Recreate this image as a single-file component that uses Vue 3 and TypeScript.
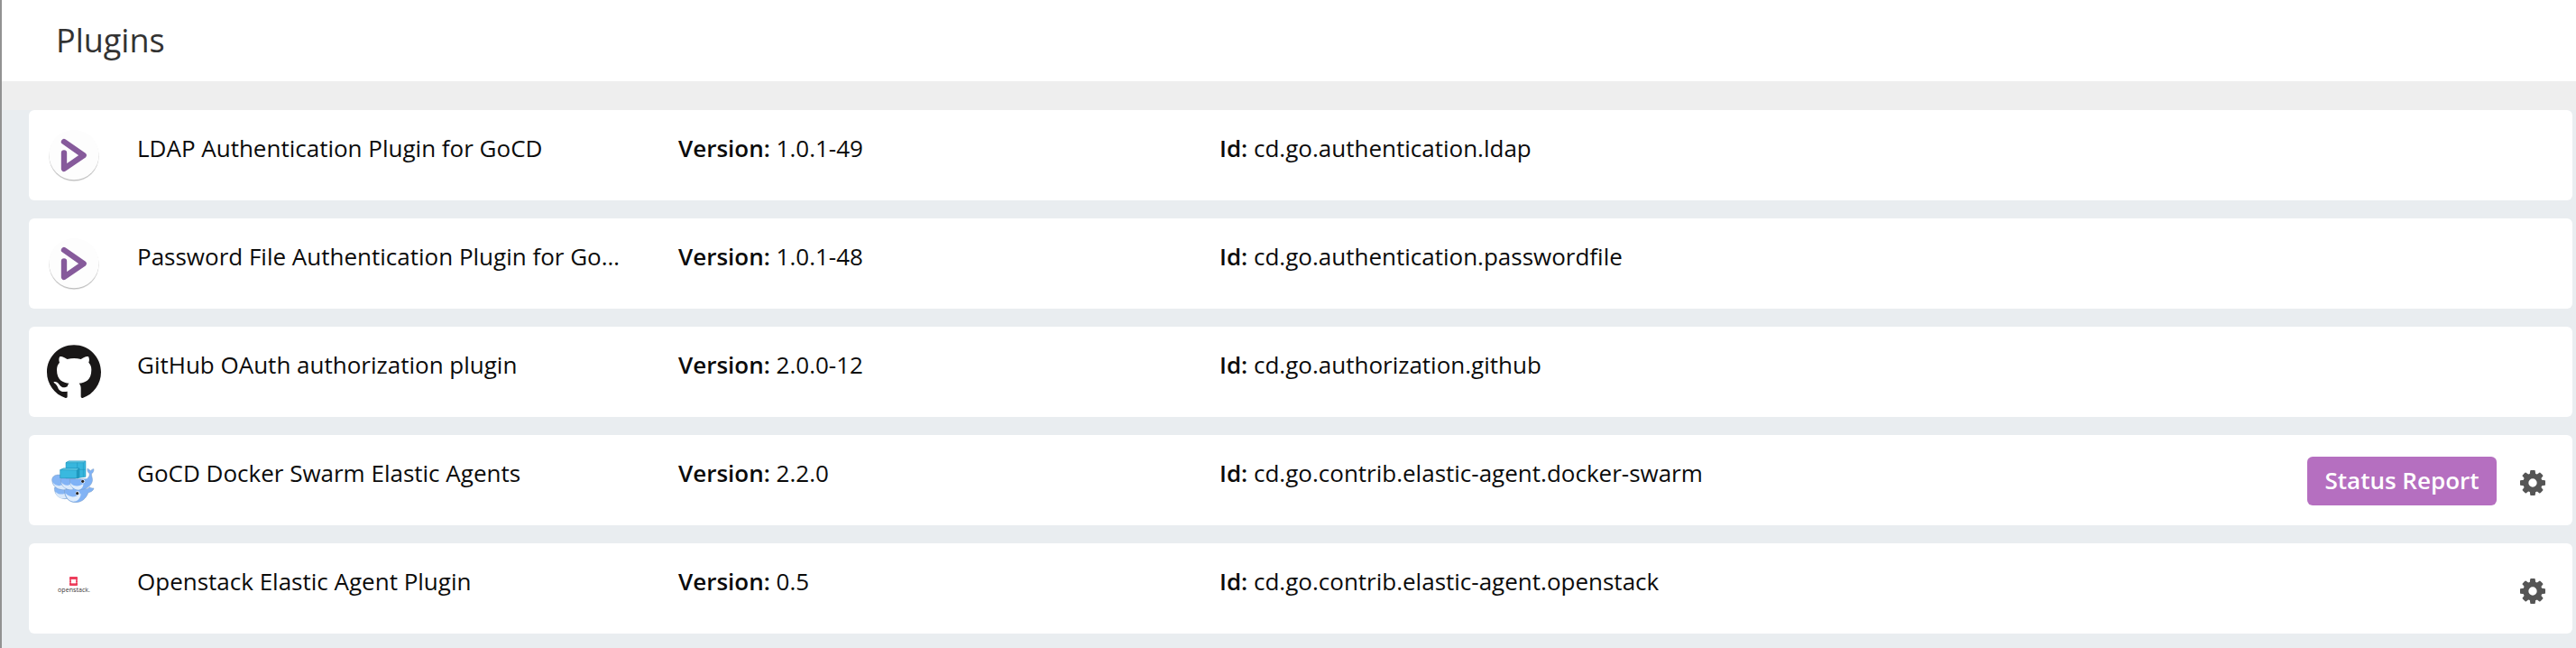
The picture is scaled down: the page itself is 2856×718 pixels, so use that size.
<script setup lang="ts">
type Icon = 'gocd' | 'github' | 'docker' | 'openstack'

interface Plugin {
  name: string
  version: string
  id: string
  icon: Icon
  statusReport?: boolean
  settings?: boolean
}

const plugins: Plugin[] = [
  { name: 'LDAP Authentication Plugin for GoCD', version: '1.0.1-49', id: 'cd.go.authentication.ldap', icon: 'gocd' },
  { name: 'Password File Authentication Plugin for Go…', version: '1.0.1-48', id: 'cd.go.authentication.passwordfile', icon: 'gocd' },
  { name: 'GitHub OAuth authorization plugin', version: '2.0.0-12', id: 'cd.go.authorization.github', icon: 'github' },
  { name: 'GoCD Docker Swarm Elastic Agents', version: '2.2.0', id: 'cd.go.contrib.elastic-agent.docker-swarm', icon: 'docker', statusReport: true, settings: true },
  { name: 'Openstack Elastic Agent Plugin', version: '0.5', id: 'cd.go.contrib.elastic-agent.openstack', icon: 'openstack', settings: true },
]
</script>

<template>
  <div class="page">
    <header class="header"><h1>Plugins</h1></header>
    <div class="band"></div>
    <main class="list">
      <section v-for="p in plugins" :key="p.id" class="card">
        <svg class="logo" viewBox="36 36 180 180">
          <g v-if="p.icon === 'gocd'">
            <circle cx="126" cy="130" r="83" fill="#e2e2e2" />
            <circle cx="126" cy="128.500" r="82.500" fill="#bdbdbd" />
            <circle cx="126" cy="125" r="83" fill="#fdfdfd" />
            <path d="M93 81L158 126.500L93 171V118" fill="none" stroke="#865a9b" stroke-width="19" stroke-linecap="round" stroke-linejoin="round" />
          </g>
          <g v-else-if="p.icon === 'github'">
            <path
              fill="#191717"
              d="M126 37C76 37 36 77 36 127C36 167 61 201 98 213C102 214 104 211 104 208V191C78 197 73 179 73 179C69 168 62 164 62 164C54 158 63 159 63 159C72 160 77 168 77 168C85 182 98 178 104 175C105 170 107 166 110 164C90 162 69 154 69 119C69 109 72 101 78 95C77 92 74 83 79 75C79 75 86 72 104 84C118 80 134 80 149 84C166 72 174 75 174 75C179 85 176 92 175 95C181 101 184 109 184 119C184 154 163 162 143 164C146 167 149 173 149 181V208C149 211 151 214 155 213C191 201 216 167 216 127C216 77 176 37 126 37Z"
            />
          </g>
          <g v-else-if="p.icon === 'docker'" stroke-linejoin="round">
            <g stroke="#7d9dc0" stroke-width="1.500">
              <path d="M61 151C60 170 73 187 95 188C110 188 120 180 122 160L96 143Z" fill="#86b6f5" />
              <path d="M64 164C76 177 93 174 104 165L106 184C88 192 68 184 64 164Z" fill="#d9e9fb" stroke="none" />
              <path d="M94 158C94 184 109 200 131 200C151 200 166 188 174 167C183 166 191 160 192 153C185 153 181 151 177 149C174 154 170 155 165 155L150 147Z" fill="#82b3f5" />
              <path d="M97 169C111 185 131 185 149 170C149 187 136 197 124 197C110 196 101 186 97 169Z" fill="#dfedfc" stroke="none" />
              <path d="M53 126C53 112 67 106 83 109L104 121L98 158C73 160 55 149 53 126Z" fill="#86b6f5" />
              <path d="M55 133C66 147 80 147 92 139L99 157C75 159 60 150 55 133Z" fill="#d9e9fb" stroke="none" />
              <path d="M82 124C82 144 95 158 121 158L131 121L87 119Z" fill="#82b3f5" />
              <path d="M83 132C94 146 107 146 117 137L123 157C100 159 88 149 83 132Z" fill="#d9e9fb" stroke="none" />
              <path d="M112 122H169C176 116 179 110 177 103C171 101 170 94 171 87C175 91 179 92 182 95C184 91 188 89 192 89C192 97 189 102 184 105C185 115 189 123 187 130C182 149 162 159 141 158C122 157 111 144 112 122Z" fill="#7fb2f6" />
              <path d="M113 134C125 149 144 148 157 138C158 148 151 157 141 158C126 156 116 148 113 134Z" fill="#dfedfc" stroke="none" />
            </g>
            <g stroke="#1b8fb8" stroke-width="1.500">
              <path d="M99 68L109 63H165V115L137 119H99Z" fill="#37b6dd" />
              <path d="M99 68L109 63H165L157 68Z" fill="#6dd0e9" />
              <path d="M137 68V92M137 91H164M157 68V116" fill="none" />
              <path d="M80 92L92 87H144L136 93V119H80Z" fill="#39b9df" />
              <path d="M80 92L92 87H144L136 93Z" fill="#65cde7" />
              <path d="M136 93L144 87V117L136 120Z" fill="#209abf" />
            </g>
            <circle cx="156" cy="130" r="6.500" fill="#edf5ff" />
            <circle cx="155" cy="130" r="4.800" fill="#272525" />
            <circle cx="138" cy="170" r="7" fill="#edf5ff" />
            <circle cx="137" cy="170" r="4.800" fill="#272525" />
          </g>
          <g v-else>
            <rect x="111" y="87" width="27" height="30" rx="2" fill="#ed3e5c" />
            <rect x="117" y="96" width="15" height="13" fill="#fff" />
            <path d="M111 99H117M132 99H138M111 106H117M132 106H138" stroke="#f7a5b3" stroke-width="2" />
            <text class="wordmark" x="72" y="137" textLength="108" lengthAdjust="spacingAndGlyphs">openstack.</text>
          </g>
        </svg>
        <div class="name">{{ p.name }}</div>
        <div class="field"><b>Version:</b> {{ p.version }}</div>
        <div class="field"><b>Id:</b> {{ p.id }}</div>
        <div class="actions">
          <button v-if="p.statusReport" class="report" type="button">Status Report</button>
          <svg v-if="p.settings" class="gear" viewBox="128 128 1536 1536">
            <path
              fill="#555"
              d="M1152 896q0-106-75-181t-181-75-181 75-75 181 75 181 181 75 181-75 75-181zm512-109v222q0 12-8 23t-20 13l-185 28q-19 54-39 91 35 50 107 138 10 12 10 25t-9 23q-27 37-99 108t-94 71q-12 0-26-9l-138-108q-44 23-91 38-16 136-29 186-7 28-36 28h-222q-14 0-24.500-8.500t-11.500-21.500l-28-184q-49-16-90-37l-141 107q-10 9-25 9-14 0-25-11-126-114-165-168-7-10-7-23 0-12 8-23 15-21 51-66.500t54-70.500q-27-50-41-99l-183-27q-13-2-21-12.500t-8-23.500v-222q0-12 8-23t19-13l186-28q14-46 39-92-40-57-107-138-10-12-10-24 0-10 9-23 26-36 98.500-107.500t94.500-71.500q13 0 26 10l138 107q44-23 91-38 16-136 29-186 7-28 36-28h222q14 0 24.500 8.500t11.500 21.500l28 184q49 16 90 37l142-107q9-9 24-9 13 0 25 10 129 119 165 170 7 8 7 22 0 12-8 23-15 21-51 66.500t-54 70.500q26 50 41 98l183 28q13 2 21 12.500t8 23.500z"
            />
          </svg>
        </div>
      </section>
    </main>
  </div>
</template>

<style>
body {
  margin: 0;
  overflow: hidden;
}
</style>

<style scoped>
.page {
  box-sizing: border-box;
  height: 718px;
  overflow: hidden;
  border-left: 2px solid #929292;
  background: #e9edf0;
  color: #0b0b0b;
  font-family: 'Open Sans', 'Noto Sans', sans-serif;
  font-size: 26px;
}
.header {
  display: flex;
  align-items: center;
  height: 90px;
  padding-left: 60px;
  background: #fff;
}
h1 {
  margin: 0;
  color: #333;
  font-size: 36px;
  font-weight: 400;
  line-height: 50px;
}
.band {
  height: 32px;
  background: #eee;
}
.list {
  display: flex;
  flex-direction: column;
  gap: 20px;
  padding: 0 4px 0 30px;
}
.card {
  box-sizing: border-box;
  display: grid;
  grid-template-columns: 100px 600px 600px 720px 1fr;
  height: 100px;
  padding: 20px 30px 0 20px;
  border-radius: 6px;
  background: #fff;
}
.logo {
  width: 60px;
  height: 60px;
}
.name,
.field {
  height: 44px;
  line-height: 44px;
  white-space: nowrap;
}
.field b {
  font-weight: 600;
}
.actions {
  display: flex;
  align-items: flex-start;
  justify-content: flex-end;
  gap: 26px;
  padding-top: 4px;
}
.report {
  box-sizing: border-box;
  width: 210px;
  height: 54px;
  padding: 0 0 2px;
  border: 0;
  border-radius: 6px;
  background: #b56fc0;
  color: #fff;
  font: 600 26px/52px 'Open Sans', 'Noto Sans', sans-serif;
}
.gear {
  width: 28px;
  height: 28px;
  margin-top: 14.500px;
}
.wordmark {
  fill: #3c3536;
  font: 500 23px 'Open Sans', sans-serif;
}
</style>
